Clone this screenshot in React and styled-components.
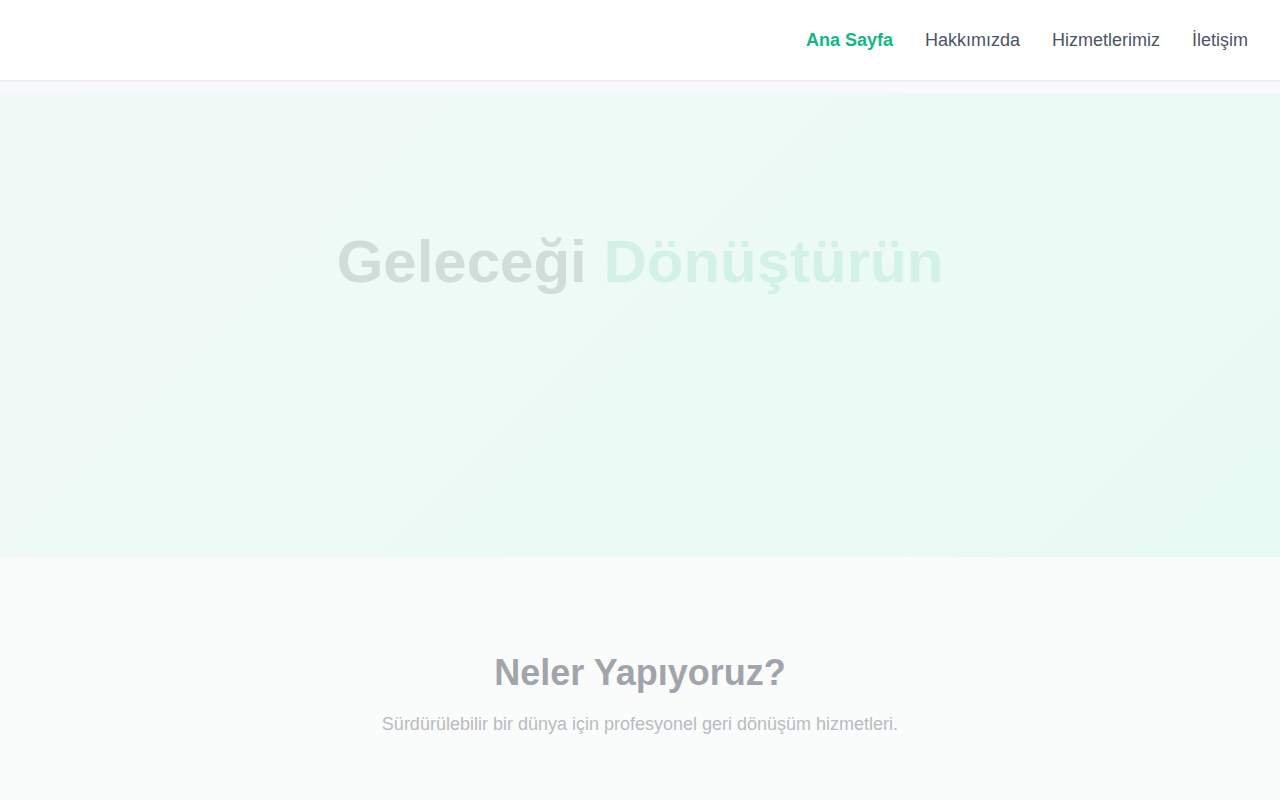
import React from "react";
import styled, { createGlobalStyle } from "styled-components";

const GlobalStyle = createGlobalStyle`
  * { box-sizing: border-box; }
  body {
    margin: 0;
    font-family: "Liberation Sans", Arial, sans-serif;
    background: #f8f9fb;
  }
`;

const links = ["Ana Sayfa", "Hakkımızda", "Hizmetlerimiz", "İletişim"];

const App = () => {
  return (
    <>
      <GlobalStyle />
      <Header>
        <Nav>
          {links.map((l, i) => (
            <NavLink key={l} $active={i === 0}>
              {l}
            </NavLink>
          ))}
        </Nav>
      </Header>
      <Main>
        <Hero>
          <HeroTitle>
            Geleceği <Accent>Dönüştürün</Accent>
          </HeroTitle>
        </Hero>
        <Services>
          <SectionTitle>Neler Yapıyoruz?</SectionTitle>
          <SectionText>
            Sürdürülebilir bir dünya için profesyonel geri dönüşüm hizmetleri.
          </SectionText>
        </Services>
      </Main>
    </>
  );
};

const Header = styled.header`
  height: 80px;
  background: #ffffff;
  box-shadow: 0 1px 3px rgba(0, 0, 0, 0.08);
  display: flex;
  align-items: center;
  justify-content: flex-end;
  padding: 0 32px;
  position: relative;
  z-index: 2;
`;

const Nav = styled.nav`
  display: flex;
  gap: 32px;
`;

const NavLink = styled.a`
  font-size: 18px;
  font-weight: ${(p) => (p.$active ? 700 : 400)};
  color: ${(p) => (p.$active ? "#10b981" : "#4b5563")};
  cursor: pointer;
`;

const Main = styled.main`
  padding-top: 13px;
`;

const Hero = styled.section`
  height: 464px;
  background: linear-gradient(135deg, #f1faf7 0%, #e8faf4 100%);
  padding-top: 133px;
  text-align: center;
`;

const HeroTitle = styled.h1`
  margin: 0;
  font-size: 60px;
  line-height: 1.2;
  font-weight: 700;
  color: #d2dcdb;
`;

const Accent = styled.span`
  color: #d3f2e7;
`;

const Services = styled.section`
  background: #fafcfb;
  padding: 94px 20px 80px;
  text-align: center;
  min-height: 260px;
`;

const SectionTitle = styled.h2`
  margin: 0;
  font-size: 36px;
  line-height: 1.2;
  font-weight: 700;
  color: #a1a5ab;
`;

const SectionText = styled.p`
  margin: 17px 0 0;
  font-size: 18px;
  line-height: 1.5;
  color: #b8bbc1;
`;

export default App;
